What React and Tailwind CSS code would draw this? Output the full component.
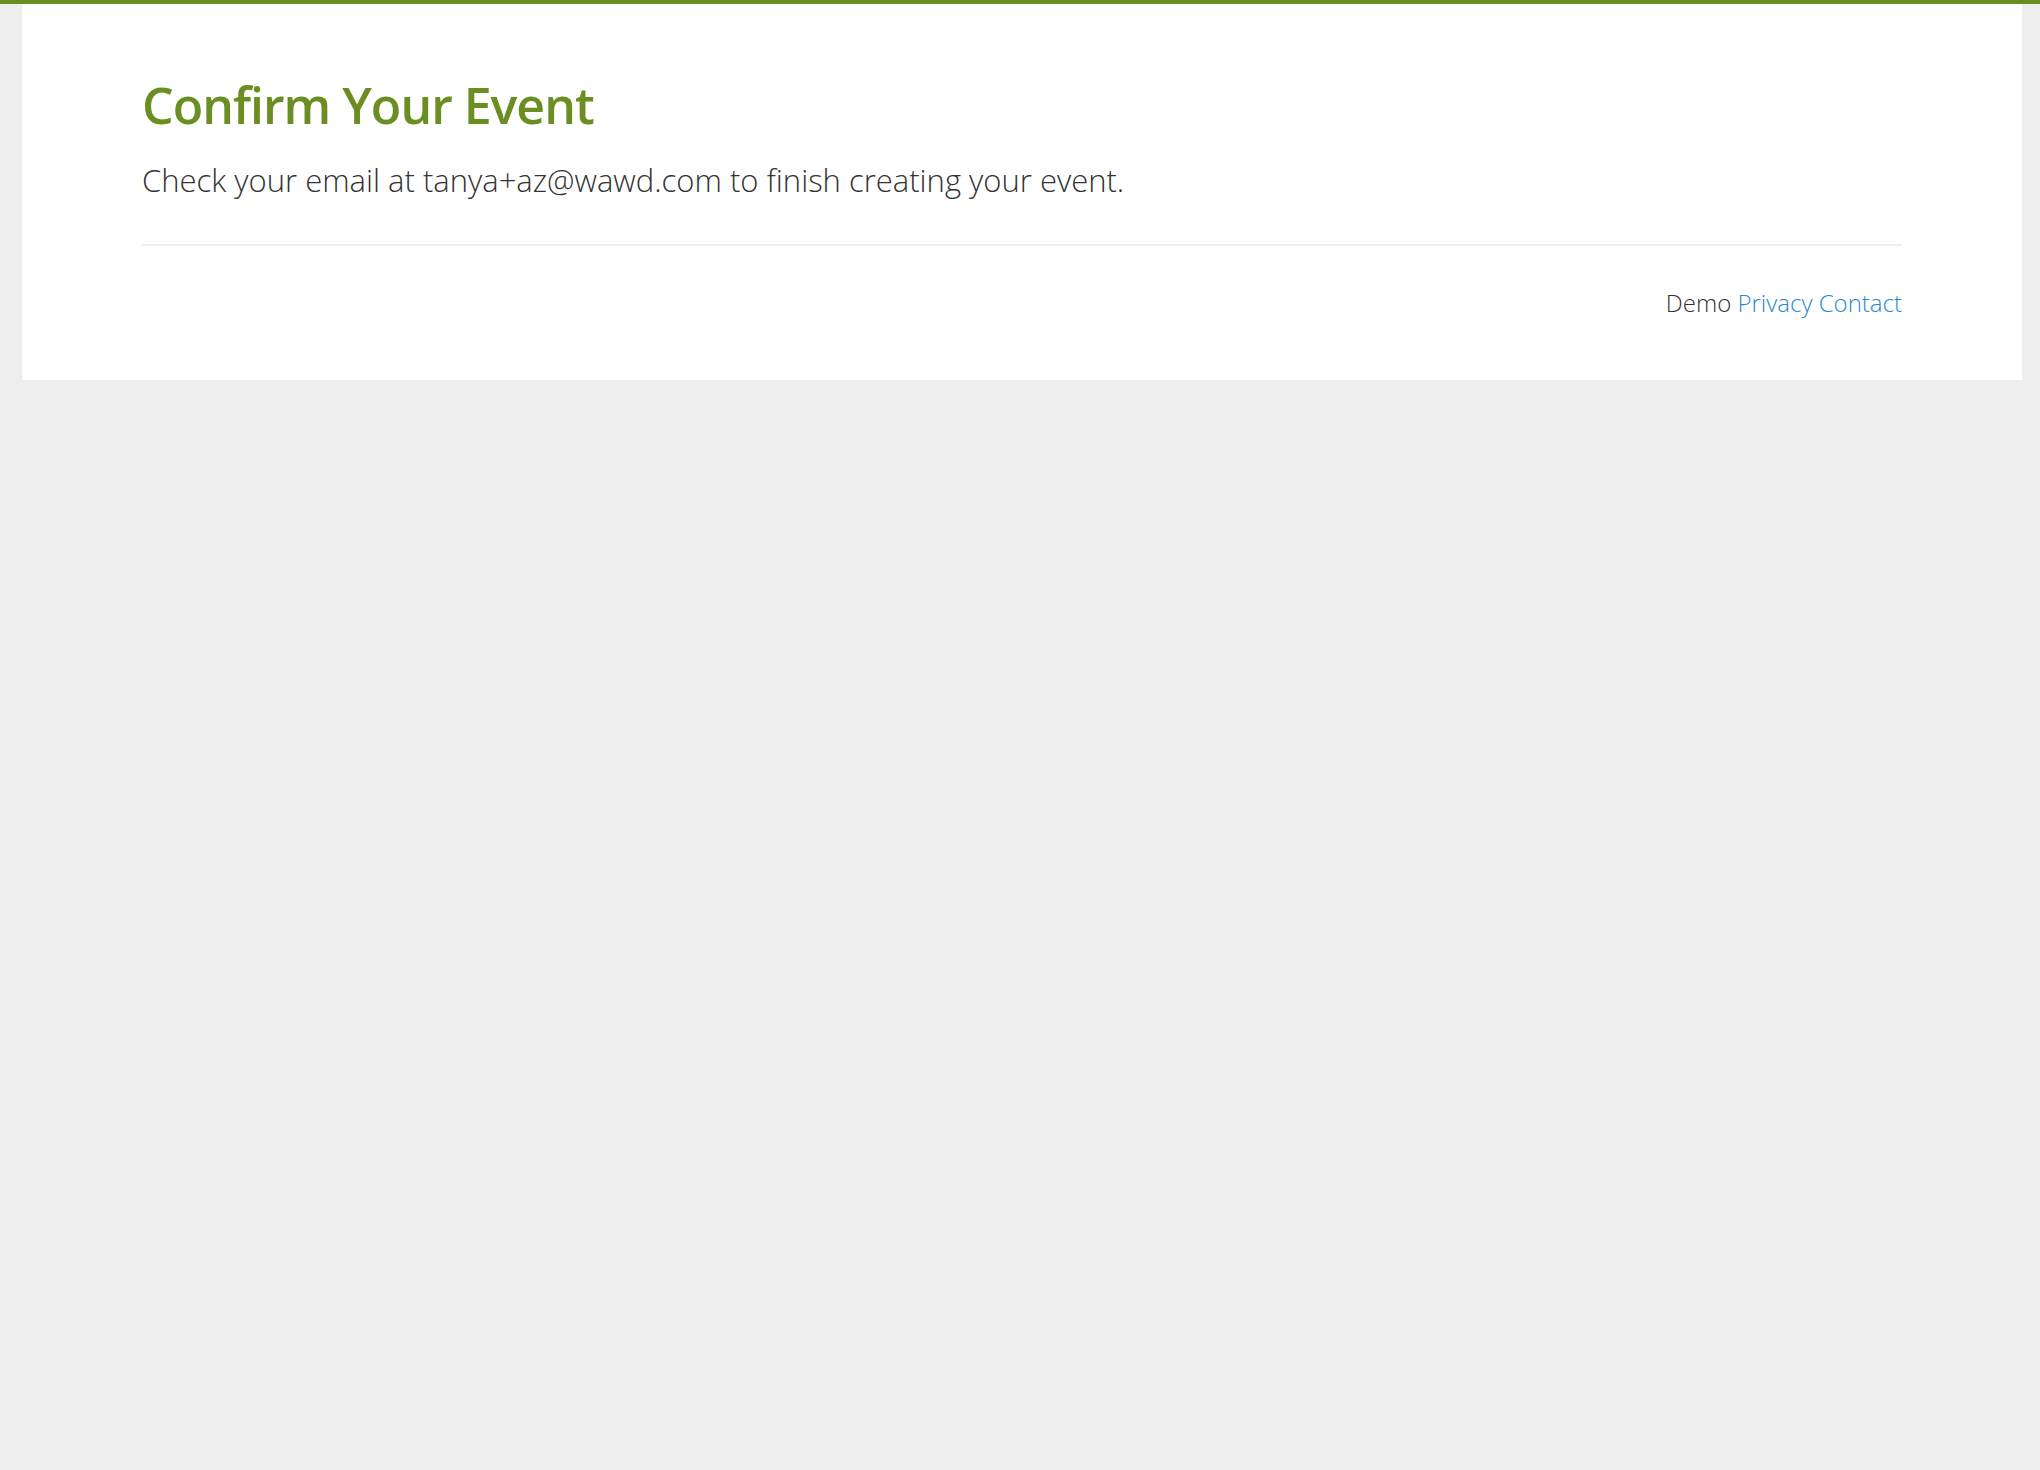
import React from 'react';

export default function App() {
  return (
    <div className="min-h-[1470px] bg-[#eeeeee] font-['Open_Sans',sans-serif]">
      {/* top accent bar */}
      <div className="h-[4px] bg-[#6b8e23]" />

      <div className="ml-[22px] w-[2000px] bg-white px-[120px] pt-[74px] pb-[60px]">
        <h1 className="text-[50px] leading-[55px] font-semibold tracking-[-1px] text-[#6b8e23]">
          Confirm Your Event
        </h1>
        <p className="mt-[26px] text-[31px] leading-[42px] font-light text-[#333333]">
          Check your email at tanya+az@wawd.com to finish creating your event.
        </p>

        <hr className="mt-[43px] border-0 border-t-2 border-[#eeeeee]" />

        <footer className="mt-[40px] text-right text-[24px] leading-[33.6px] font-light text-[#333333]">
          Demo{' '}
          <a href="#" className="text-[#2a89d2]">Privacy</a>{' '}
          <a href="#" className="text-[#2a89d2]">Contact</a>
        </footer>
      </div>
    </div>
  );
}
